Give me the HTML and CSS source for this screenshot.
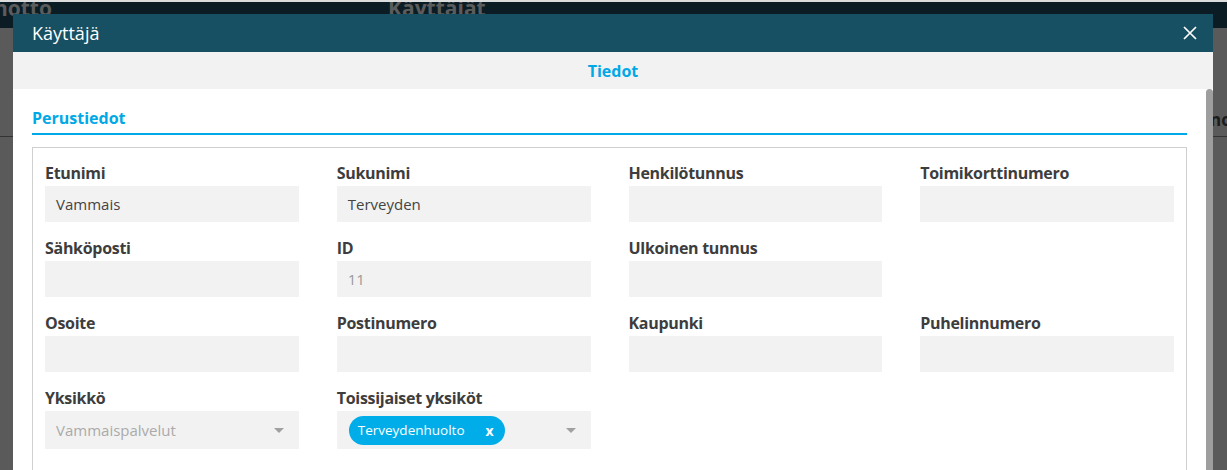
FILE: index.html
```html
<!DOCTYPE html>
<html lang="fi">
<head>
<meta charset="utf-8">
<title>Käyttäjä</title>
<link rel="stylesheet" href="styles.css">
</head>
<body>
<div class="page">
  <header class="topbar">
    <div class="brand"><span>Ajanvaraus ja vastaanotto</span></div>
    <div class="page-title">Käyttäjät</div>
  </header>
  <div class="page-row">nouto</div>
</div>

<div class="modal">
  <div class="modal-header">
    <h1 class="modal-title">Käyttäjä</h1>
    <button class="close-btn" aria-label="Sulje">
      <svg width="14" height="14" viewBox="0 0 14 14"><path d="M1 1 L13 13 M13 1 L1 13" stroke="#fff" stroke-width="1.7" fill="none"/></svg>
    </button>
  </div>
  <nav class="tabs"><span class="tab active">Tiedot</span></nav>
  <div class="modal-body">
    <div class="body-content">
      <h2 class="section-title">Perustiedot</h2>
      <div class="fieldset">
        <div class="grid">
          <div class="field"><label class="label">Etunimi</label><div class="input">Vammais</div></div>
          <div class="field"><label class="label">Sukunimi</label><div class="input">Terveyden</div></div>
          <div class="field"><label class="label">Henkilötunnus</label><div class="input"></div></div>
          <div class="field"><label class="label">Toimikorttinumero</label><div class="input"></div></div>

          <div class="field"><label class="label">Sähköposti</label><div class="input"></div></div>
          <div class="field"><label class="label">ID</label><div class="input readonly">11</div></div>
          <div class="field"><label class="label">Ulkoinen tunnus</label><div class="input"></div></div>
          <div class="field"></div>

          <div class="field"><label class="label">Osoite</label><div class="input"></div></div>
          <div class="field"><label class="label">Postinumero</label><div class="input"></div></div>
          <div class="field"><label class="label">Kaupunki</label><div class="input"></div></div>
          <div class="field"><label class="label">Puhelinnumero</label><div class="input"></div></div>

          <div class="field"><label class="label">Yksikkö</label>
            <div class="select disabled"><span class="select-value">Vammaispalvelut</span><span class="caret"></span></div>
          </div>
          <div class="field"><label class="label">Toissijaiset yksiköt</label>
            <div class="select"><span class="chip">Terveydenhuolto<span class="chip-x">x</span></span><span class="caret"></span></div>
          </div>
        </div>
      </div>
    </div>
    <div class="scrollbar"><div class="scroll-thumb"></div></div>
  </div>
</div>
</body>
</html>
```

FILE: styles.css
```css
* { box-sizing: border-box; }
html, body {
  margin: 0;
  padding: 0;
  height: 100%;
  overflow: hidden;
}
body {
  font-family: "Open Sans", "Liberation Sans", sans-serif;
  background: #5a5a5a;
  position: relative;
}

/* background page (dimmed by the modal backdrop) */
.page {
  height: 100%;
  border-top: 2px solid #dcdcdc;
}
.topbar {
  height: 26px;
  background: #0b1c24;
  display: flex;
  align-items: flex-start;
  color: #5c5c5c;
  font-weight: 700;
  font-size: 21px;
  overflow: hidden;
}
.brand {
  width: 52px;
  display: flex;
  justify-content: flex-end;
  overflow: hidden;
  white-space: nowrap;
  flex: none;
  line-height: 30px;
  height: 30px;
  margin-top: -9px;
}
.page-title {
  margin-left: 336px;
  white-space: nowrap;
  line-height: 30px;
  margin-top: -9px;
}
.page-row {
  padding: 80px 0 5px 1210px;
  white-space: nowrap;
  font-weight: 700;
  font-size: 17px;
  color: #1c1c1c;
  border-bottom: 1px solid #333;
}

/* modal */
.modal {
  position: absolute;
  left: 13px;
  top: 14px;
  width: 1200px;
  bottom: 0;
  background: #fff;
  display: flex;
  flex-direction: column;
}
.modal-header {
  height: 38px;
  background: #174f63;
  display: flex;
  align-items: center;
  justify-content: space-between;
  padding: 0 16px 0 19px;
  flex: none;
}
.modal-title {
  margin: 0;
  font-size: 18px;
  font-weight: 400;
  color: #fff;
  line-height: 24px;
}
.close-btn {
  background: none;
  border: 0;
  padding: 0;
  width: 14px;
  height: 14px;
  display: flex;
}
.tabs {
  height: 37px;
  background: #f2f2f2;
  display: flex;
  align-items: center;
  justify-content: center;
  flex: none;
}
.tab {
  font-size: 16px;
  font-weight: 700;
  color: #00a8e6;
}
.modal-body {
  flex: 1;
  min-height: 0;
  display: flex;
}
.body-content {
  flex: 1;
  min-width: 0;
  overflow: hidden;
  padding: 17px 19px 0 19px;
}
.scrollbar {
  width: 7px;
  flex: none;
  display: flex;
}
.scroll-thumb {
  flex: 1;
  background: #9e9e9e;
  border-radius: 4px 4px 0 0;
}
.section-title {
  margin: 0;
  font-size: 16px;
  font-weight: 700;
  color: #00a8e6;
  line-height: 24px;
  padding-bottom: 3px;
  border-bottom: 2px solid #00a8e6;
}
.fieldset {
  margin-top: 12px;
  border: 1px solid #cfcfcf;
  padding: 15px 12px 40px 12px;
}
.grid {
  display: grid;
  grid-template-columns: repeat(4, 1fr);
  column-gap: 38px;
  row-gap: 16px;
}
.field {
  display: flex;
  flex-direction: column;
}
.label {
  font-size: 16px;
  font-weight: 700;
  color: #3d3d3d;
  line-height: 20px;
  margin-bottom: 3px;
  letter-spacing: -0.3px;
}
.input {
  height: 36px;
  background: #f2f2f2;
  padding: 0 11px;
  display: flex;
  align-items: center;
  font-size: 15px;
  color: #444;
}
.input.readonly { color: #9a9a9a; }
.select {
  height: 38px;
  background: #f2f2f2;
  display: flex;
  align-items: center;
  justify-content: space-between;
  padding: 0 15px 0 11px;
  font-size: 15px;
}
.select.disabled .select-value { color: #aaaaaa; }
.caret {
  width: 0;
  height: 0;
  border-left: 5px solid transparent;
  border-right: 5px solid transparent;
  border-top: 5px solid #a0a0a0;
}
.chip {
  margin-left: 1px;
  height: 29px;
  border-radius: 15px;
  background: #00ade9;
  color: #fff;
  font-size: 13.5px;
  display: flex;
  align-items: center;
  padding: 0 11px 0 9px;
}
.chip-x {
  margin-left: 21px;
  font-weight: 700;
  font-size: 14px;
}
```
